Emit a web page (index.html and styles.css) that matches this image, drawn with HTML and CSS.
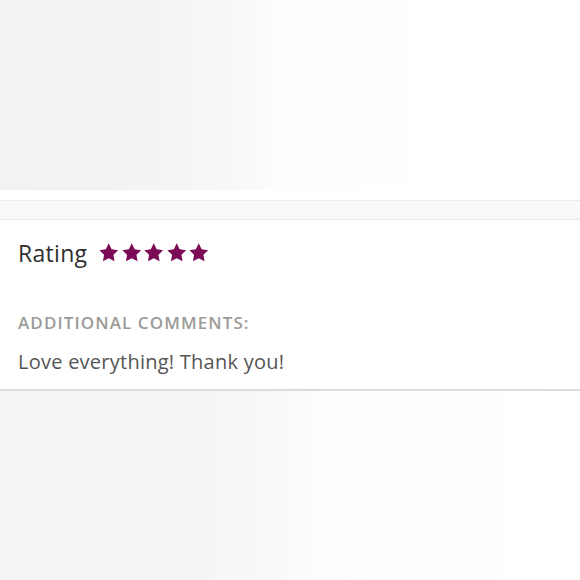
FILE: index.html
```html
<!DOCTYPE html>
<html>
<head>
  <meta charset="utf-8">
  <title>Review</title>
  <link rel="stylesheet" href="styles.css">
</head>
<body>
  <div id="foto-topo" class="foto"></div>
  <div id="faixa"></div>

  <div id="avaliacao">
    <div id="nota">
      <h2 id="nota-titulo">Rating</h2>
      <ul id="estrelas">
        <li><svg viewBox="0 0 24 24"><path d="M12 1.5L15.23 8.05L22.46 9.1L17.23 14.2L18.47 21.4L12 18L5.53 21.4L6.77 14.2L1.54 9.1L8.77 8.05Z"/></svg></li>
        <li><svg viewBox="0 0 24 24"><path d="M12 1.5L15.23 8.05L22.46 9.1L17.23 14.2L18.47 21.4L12 18L5.53 21.4L6.77 14.2L1.54 9.1L8.77 8.05Z"/></svg></li>
        <li><svg viewBox="0 0 24 24"><path d="M12 1.5L15.23 8.05L22.46 9.1L17.23 14.2L18.47 21.4L12 18L5.53 21.4L6.77 14.2L1.54 9.1L8.77 8.05Z"/></svg></li>
        <li><svg viewBox="0 0 24 24"><path d="M12 1.5L15.23 8.05L22.46 9.1L17.23 14.2L18.47 21.4L12 18L5.53 21.4L6.77 14.2L1.54 9.1L8.77 8.05Z"/></svg></li>
        <li><svg viewBox="0 0 24 24"><path d="M12 1.5L15.23 8.05L22.46 9.1L17.23 14.2L18.47 21.4L12 18L5.53 21.4L6.77 14.2L1.54 9.1L8.77 8.05Z"/></svg></li>
      </ul>
    </div>

    <div id="comentarios-titulo">Additional comments:</div>
    <p id="comentario">Love everything! Thank you!</p>
  </div>

  <div id="foto-baixo" class="foto"></div>
</body>
</html>
```

FILE: styles.css
```css
* {
  box-sizing: border-box;
}

body {
  margin: 0;
  background-color: #fff;
  font-family: "Open Sans", Arial, sans-serif;
  overflow: hidden;
}

.foto {
  background: linear-gradient(to right, #f3f2f3 0%, #f4f3f4 25%, #f9f8f9 40%, #fefefe 50%, #fff 100%);
}
#foto-topo {
  height: 190px;
  margin-bottom: 10px;
}
#foto-baixo {
  height: 200px;
  background: linear-gradient(to right, #f5f5f5 0%, #f4f4f4 30%, #f8f8f8 44%, #fdfdfd 56%, #fff 100%);
}

#faixa {
  height: 20px;
  background-color: #f9f9f9;
  border-top: 1px solid #ececec;
  border-bottom: 1px solid #e9e9e9;
}

#avaliacao {
  padding: 17px 18px 14px;
  border-bottom: 2px solid #dcdcdc;
}

#nota {
  display: flex;
  align-items: center;
}
#nota-titulo {
  margin: 0;
  font-size: 23px;
  font-weight: 400;
  letter-spacing: 0.3px;
  color: #2f2f2f;
}
#estrelas {
  display: flex;
  list-style: none;
  margin: 0 0 0 11px;
  padding: 0;
  gap: 1px;
}
#estrelas svg {
  display: block;
  width: 21.5px;
  height: 21.5px;
  fill: #7b0a57;
}

#comentarios-titulo {
  margin-top: 42px;
  font-size: 17px;
  font-weight: 600;
  letter-spacing: 1.1px;
  text-transform: uppercase;
  color: #9c9b97;
}

#comentario {
  margin: 14px 0 0;
  font-size: 20px;
  letter-spacing: 0.25px;
  color: #555;
}
```
